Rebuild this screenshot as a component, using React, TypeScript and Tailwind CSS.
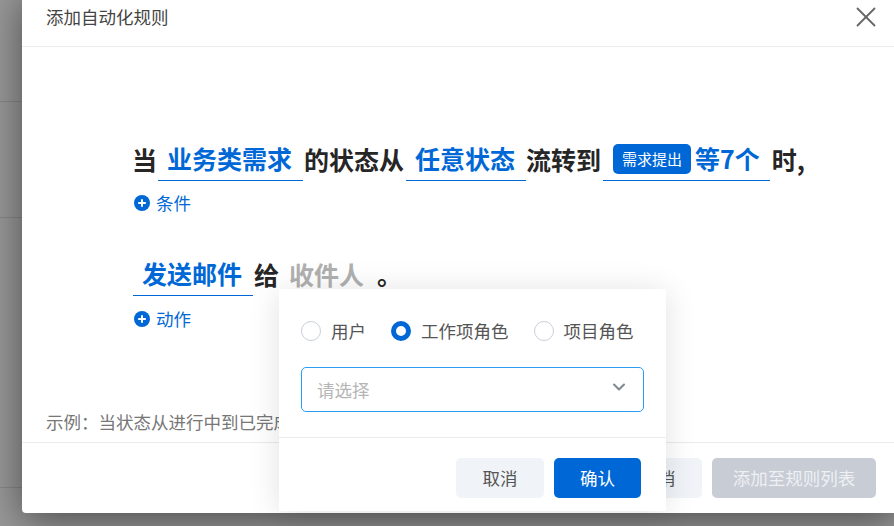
import React from 'react';
import { ChevronDown, X } from 'lucide-react';

const Field: React.FC<{ children: React.ReactNode; gray?: boolean; className?: string; pad?: string }> = ({
  children,
  gray,
  className = '',
  pad = 'pr-[11px] pl-[9px]',
}) => (
  <span
    className={`flex h-[44px] items-center pb-px ${pad} ${gray ? 'text-[#b0b0b0]' : 'border-b border-[#0068d6] text-[#0068d6]'} ${className}`}
  >
    {children}
  </span>
);

const AddLink: React.FC<{ label: string; className?: string }> = ({ label, className = 'mt-[10px]' }) => (
  <div className={`ml-[2px] flex h-[24px] items-center gap-[6px] text-[17.5px] font-normal text-[#0068d6] ${className}`}>
    <svg width="16" height="16" viewBox="0 0 16 16">
      <circle cx="8" cy="8" r="8" fill="#0068d6" />
      <path d="M8 4.2v7.6M4.2 8h7.6" stroke="#fff" strokeWidth="2" />
    </svg>
    {label}
  </div>
);

const Radio: React.FC<{ label: string; checked?: boolean }> = ({ label, checked }) => (
  <label className="flex items-center gap-[10px] text-[17.5px] text-[#555]">
    {checked ? (
      <span className="h-[20px] w-[20px] rounded-full border-[5.5px] border-[#0068d6] bg-white" />
    ) : (
      <span className="h-[20px] w-[20px] rounded-full border border-[#c9d0da] bg-white" />
    )}
    {label}
  </label>
);

export default function App() {
  return (
    <div className="relative h-[526px] w-[894px] overflow-hidden bg-[#999] font-['Noto_Sans_CJK_SC',sans-serif]">
      {/* Page behind the mask */}
      <div className="h-[102px] border-b border-[#888]" />
      <div className="h-[116px] border-b border-[#888]" />
      <div className="h-[270px] border-b border-[#888]" />

      {/* Modal */}
      <div className="absolute top-[-10px] left-[22px] flex h-[523px] w-[876px] flex-col rounded-[4px] bg-white shadow-[0_8px_40px_rgba(0,0,0,0.5)]">
        <div className="flex h-[57px] shrink-0 items-center justify-between border-b border-[#ebebeb] pt-[4px] pr-[15px] pl-[24px] text-[17.5px] text-[#444]">
          <span className="mt-[-5px]">添加自动化规则</span>
          <X size={34} strokeWidth={1.3} className="mt-[-6px] text-[#666]" />
        </div>

        <div className="flex flex-1 flex-col pt-[90px] pl-[110px] text-[25px] leading-[36px] font-bold text-[#262626]">
          <div className="flex items-center">
            <span className="mb-px w-[26px]">当</span>
            <Field>业务类需求</Field>
            <span className="mb-px ml-px">的状态从</span>
            <Field className="ml-[2px]">任意状态</Field>
            <span className="mr-[2px] mb-px">流转到</span>
            <Field pad="px-[10px]">
              <span className="mt-px mr-[4px] flex h-[30px] w-[78px] items-center justify-center rounded-[5px] bg-[#0068d6] text-[15px] font-normal text-white">
                需求提出
              </span>
              等7个
            </Field>
            <span className="mb-px ml-[2px]">时,</span>
          </div>
          <AddLink label="条件" />

          <div className="mt-[37px] flex items-center">
            <span className="w-px" />
            <Field>发送邮件</Field>
            <span className="mb-px ml-px w-[26px]">给</span>
            <Field gray>收件人</Field>
            <span className="mb-px ml-[2px]">。</span>
          </div>
          <AddLink label="动作" className="mt-[11px]" />
        </div>

        <div className="pb-[8px] pl-[24px] text-[17.5px] leading-[24px] text-[#777]">
          {'示例\uFF1A当状态从进行中到已完成时\uFF0C发送邮件给负责人'}
        </div>
        <div className="flex h-[71px] shrink-0 justify-end gap-[10px] border-t border-[#ebebeb] pt-[15px] pr-[22px] text-[17.5px]">
          <button className="h-[40px] w-[88px] rounded-[5px] bg-[#f0f3f7] text-[#555]">取消</button>
          <button className="h-[40px] w-[164px] rounded-[5px] bg-[#c7ccd5] text-[#eef0f3]">添加至规则列表</button>
        </div>
      </div>

      {/* Popover */}
      <div className="absolute top-[289px] left-[279px] flex h-[222px] w-[387px] flex-col bg-white shadow-[0_2px_30px_rgba(0,0,0,0.12)]">
        <div className="flex flex-1 flex-col px-[22px] pt-[30px]">
          <div className="flex h-[24px] items-center gap-[25px]">
            <Radio label="用户" />
            <Radio label="工作项角色" checked />
            <Radio label="项目角色" />
          </div>
          <div className="mt-[24px] flex h-[45px] items-center justify-between rounded-[5px] border border-[#2a9df4] pr-[14px] pl-[15px] text-[17.5px] text-[#b5b5b5]">
            <span className="mt-[2px]">请选择</span>
            <ChevronDown size={20} strokeWidth={2.5} className="mt-[-6px] text-[#808890]" />
          </div>
        </div>
        <div className="flex h-[74px] shrink-0 justify-end gap-[10px] border-t border-[#ebebeb] pt-[20px] pr-[25px] text-[17.5px]">
          <button className="h-[40px] w-[88px] rounded-[5px] bg-[#f0f3f7] text-[#555]">取消</button>
          <button className="h-[40px] w-[87px] rounded-[5px] bg-[#0068d6] text-white">确认</button>
        </div>
      </div>
    </div>
  );
}
